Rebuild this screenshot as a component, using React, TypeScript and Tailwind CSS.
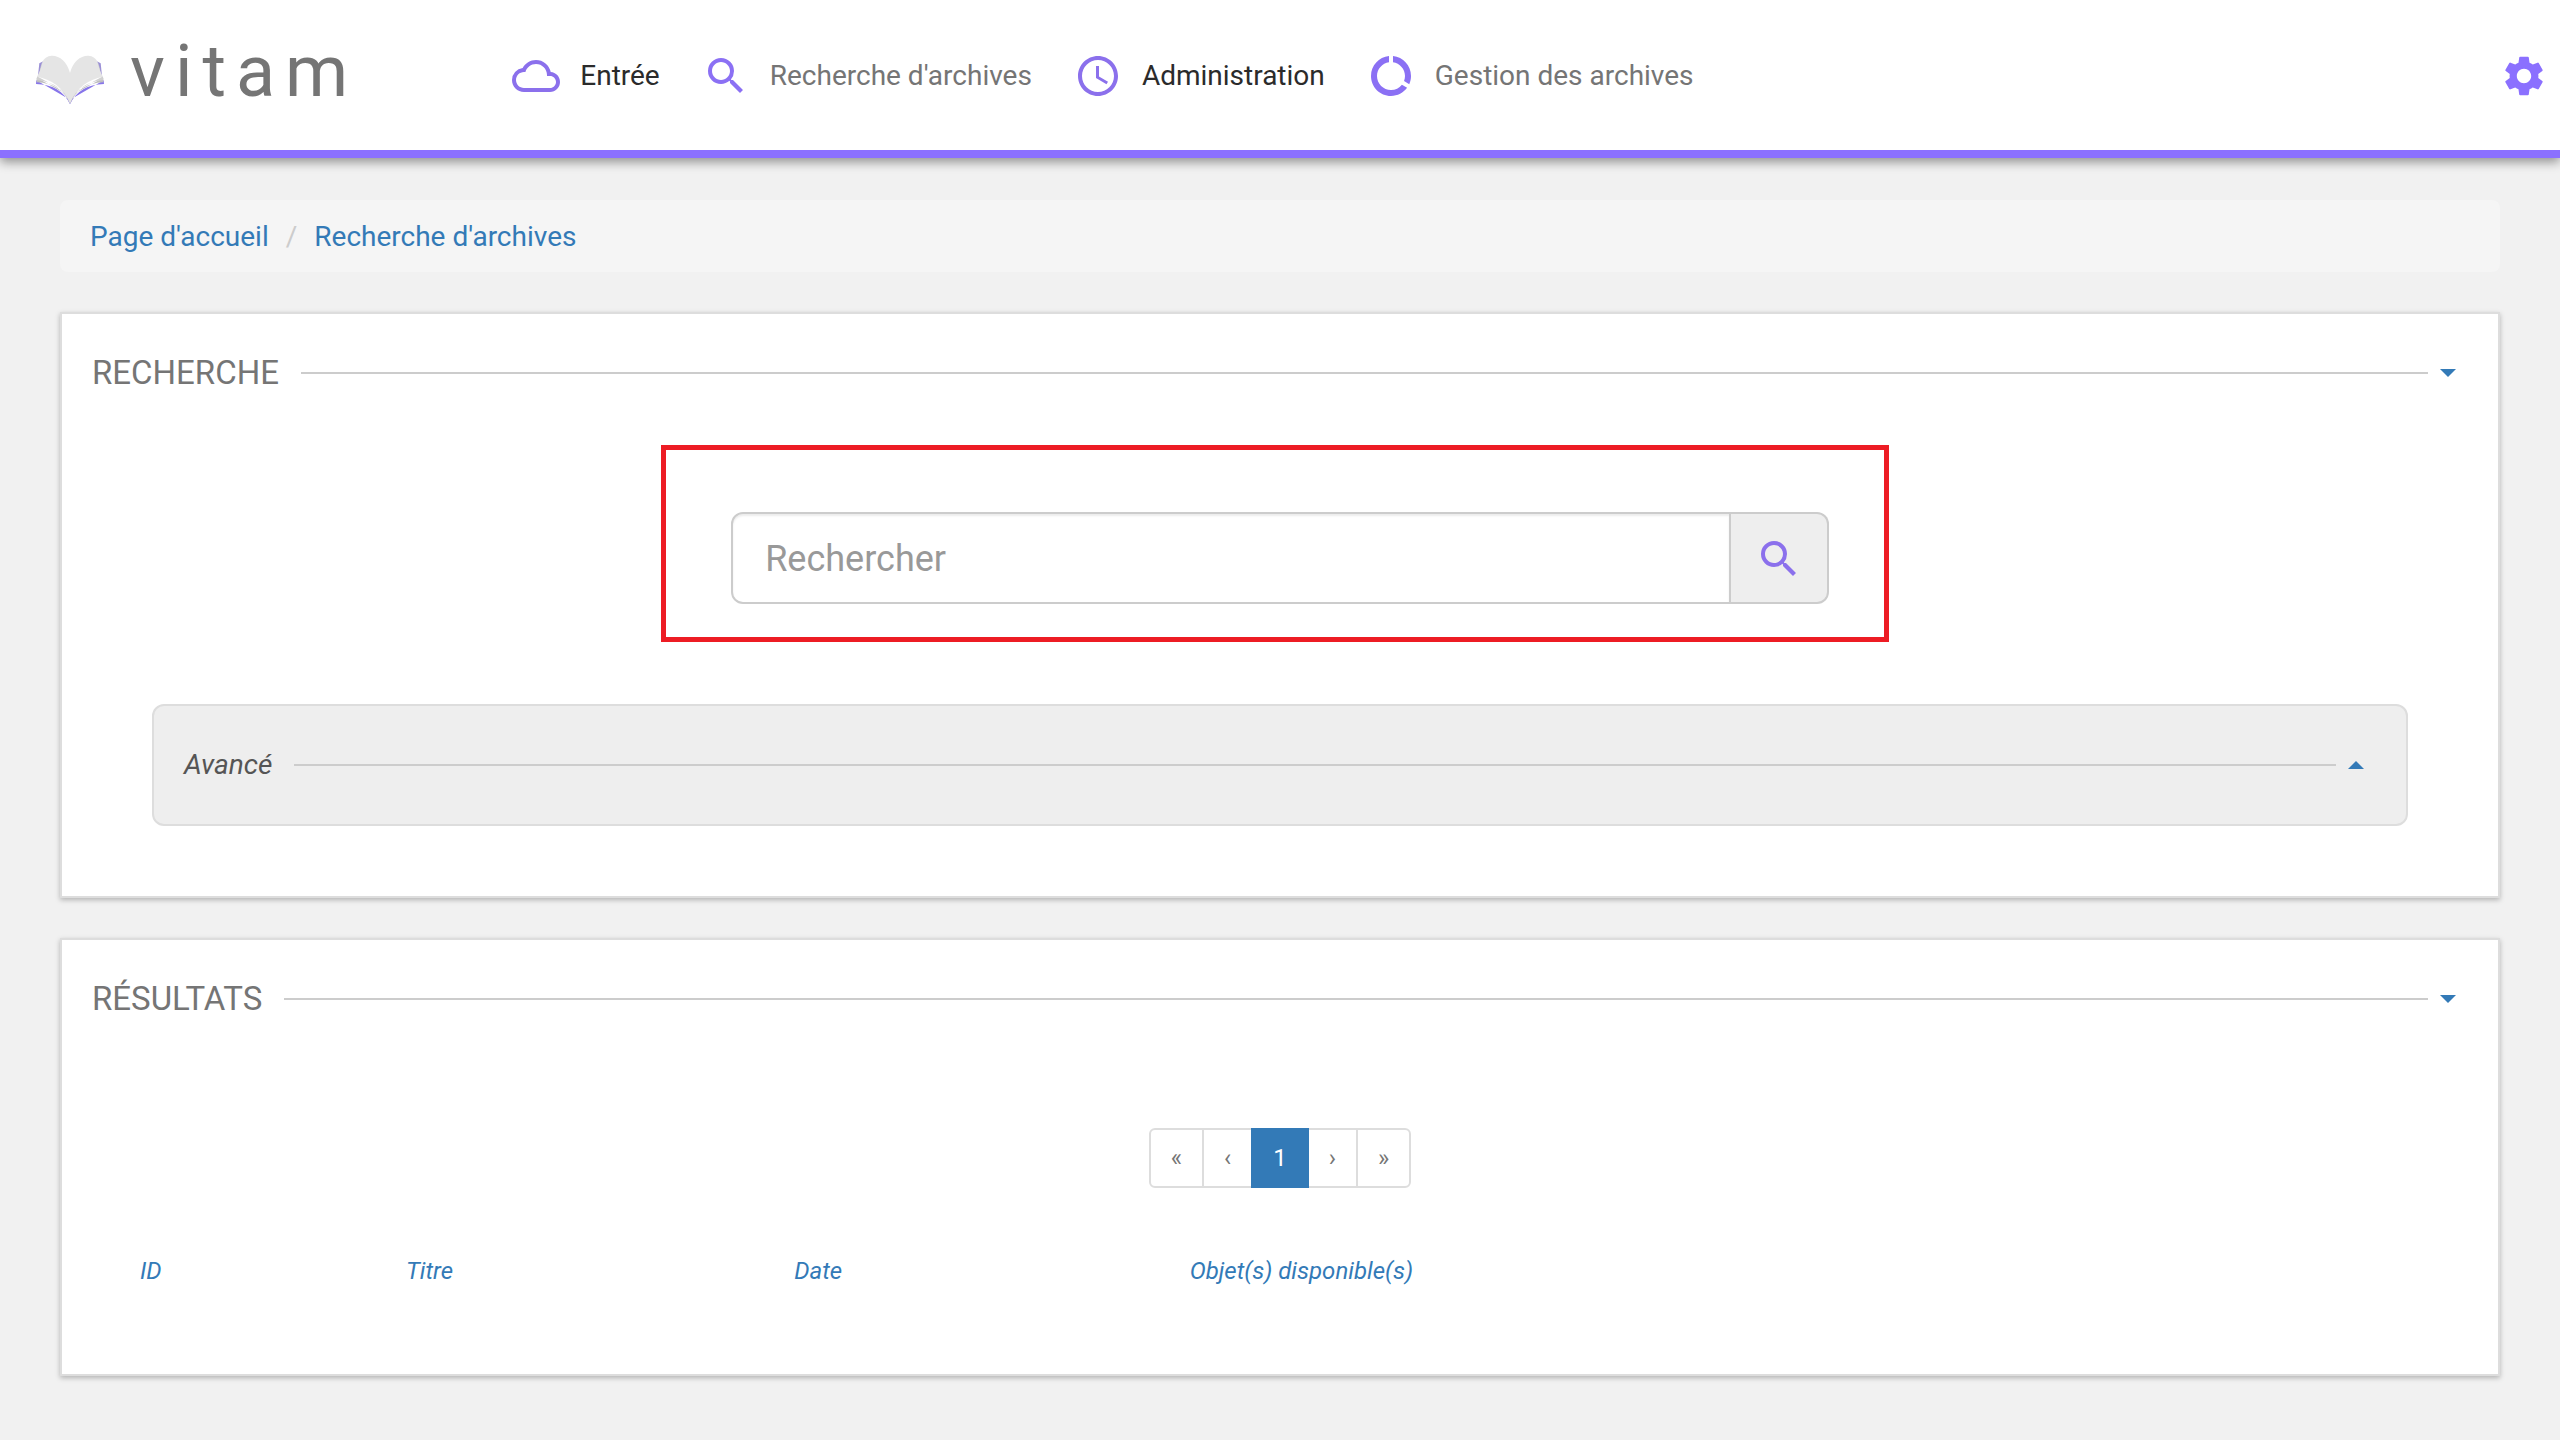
import type { ReactNode } from "react";
import {
  MdCloudQueue,
  MdDataUsage,
  MdSchedule,
  MdSearch,
  MdSettings,
} from "react-icons/md";

const navItems = [
  { label: "Entrée", Icon: MdCloudQueue, menu: true },
  { label: "Recherche d'archives", Icon: MdSearch, menu: false },
  { label: "Administration", Icon: MdSchedule, menu: true },
  { label: "Gestion des archives", Icon: MdDataUsage, menu: false },
];

const columns = [
  { label: "ID", width: "w-[11.5%]" },
  { label: "Titre", width: "w-[16.8%]" },
  { label: "Date", width: "w-[17.1%]" },
  { label: "Objet(s) disponible(s)", width: "" },
];

const pages = [
  { symbol: "«", label: "Première page" },
  { symbol: "‹", label: "Page précédente" },
  { symbol: "1", label: "Page 1", active: true },
  { symbol: "›", label: "Page suivante" },
  { symbol: "»", label: "Dernière page" },
];

function BookHalf() {
  return (
    <>
      <path d="M131 182 L118 189 L114 226 L130 222 Z" fill="#9a8fd6" />
      <path d="M126 186 L120 206 L117 228 L136 222 Z" fill="#c9c9d0" />
      <path d="M109 240 L108 251 Q182 252 210 312 L210 298 Z" fill="#8775ea" />
      <path d="M110 232 L110 246 Q184 249 210 310 L210 288 Z" fill="#bdbdbd" />
      <path d="M111 228 L111 240 Q186 247 210 309 L210 282 Z" fill="#d0d0d0" />
      <path
        d="M210 218 C202 184 178 165 155 166 C142 167 131 174 127 186 C124 200 119 217 111 229 C152 236 192 262 210 309 Z"
        fill="#e5e5e5"
      />
    </>
  );
}

function Logo() {
  return (
    <a href="#" className="flex items-center gap-[26px] pb-2">
      <svg viewBox="108 164 204 150" className="mt-4 h-[50px] w-[68px]" aria-hidden="true">
        <BookHalf />
        <g transform="translate(420 0) scale(-1 1)">
          <BookHalf />
        </g>
      </svg>
      <span className="text-[72px] leading-none tracking-[10px] text-[#757575]">vitam</span>
    </a>
  );
}

function Caret({ up = false }: { up?: boolean }) {
  return (
    <svg viewBox="0 0 16 8" className="h-2 w-4" aria-hidden="true">
      <path d={up ? "M0 8 L8 0 L16 8 Z" : "M0 0 L16 0 L8 8 Z"} fill="#337ab7" />
    </svg>
  );
}

function SectionTitle({ children, toggle, up }: { children: ReactNode; toggle: string; up?: boolean }) {
  return (
    <div className="flex h-10 items-center">
      {children}
      <span className="h-0.5 flex-1 bg-[#ccc]" />
      <button type="button" aria-label={toggle} className="mx-3 flex h-10 items-center">
        <Caret up={up} />
      </button>
    </div>
  );
}

function Panel({ title, toggle, children }: { title: string; toggle: string; children: ReactNode }) {
  return (
    <section className="border-2 border-[#ddd] bg-white px-[30px] pt-[39px] shadow-[0_2px_5px_rgba(0,0,0,0.26)]">
      <SectionTitle toggle={toggle}>
        <h2 className="mr-[22px] text-[33px] leading-10 text-[#757575] uppercase">{title}</h2>
      </SectionTitle>
      {children}
    </section>
  );
}

export default function App() {
  return (
    <div className="min-h-screen bg-[#f1f1f1] font-['Roboto',sans-serif] text-[28px] leading-10 text-[#2b2b2b]">
      <header className="flex h-[158px] items-center border-b-8 border-[#8b70ff] bg-white pt-0.5 pr-3 pl-9 shadow-[0_4px_10px_rgba(0,0,0,0.4)]">
        <Logo />
        <nav className="ml-[154px] flex items-center gap-[42px]">
          {navItems.map(({ label, Icon, menu }) =>
            menu ? (
              <button key={label} type="button" className="flex items-center gap-5">
                <Icon className="size-12 text-[#8b70ec]" />
                {label}
              </button>
            ) : (
              <a key={label} href="#" className="flex items-center gap-5 text-[#757575]">
                <Icon className="size-12 text-[#8b70f4]" />
                {label}
              </a>
            ),
          )}
        </nav>
        <button type="button" aria-label="Paramètres" className="ml-auto">
          <MdSettings className="size-12 text-[#8b70ff]" />
        </button>
      </header>

      <main className="flex flex-col gap-10 px-[60px] pt-[42px]">
        <nav aria-label="Fil d'Ariane" className="rounded-lg bg-[#f5f5f5] px-[30px] pt-[17px] pb-[15px] text-[#337ab7]">
          <ol className="flex">
            <li>
              <a href="#">Page d'accueil</a>
            </li>
            <li className="flex">
              <span className="px-[17px] text-[#ccc]">/</span>
              <a href="#">Recherche d'archives</a>
            </li>
          </ol>
        </nav>

        <Panel title="Recherche" toggle="Replier la recherche">
          <form
            className="relative mx-auto mt-[119px] flex h-[92px] w-[46.2%]"
            onSubmit={(event) => event.preventDefault()}
          >
            <input
              type="text"
              aria-label="Rechercher"
              placeholder="Rechercher"
              className="min-w-0 flex-1 rounded-l-xl border-2 border-[#ccc] bg-white px-8 pt-0.5 text-4xl shadow-[inset_0_2px_2px_rgba(0,0,0,0.075)] placeholder:text-[#999]"
            />
            <button
              type="submit"
              aria-label="Lancer la recherche"
              className="flex w-[98px] items-center justify-center rounded-r-xl border-2 border-l-0 border-[#ccc] bg-[#eee] pt-0.5"
            >
              <MdSearch className="size-12 text-[#8b70ec]" />
            </button>
            <div className="pointer-events-none absolute -top-[67px] -right-[60px] -bottom-[38px] -left-[70px] border-5 border-[#ed1c24]" />
          </form>

          <div className="mx-[60px] mt-[100px] mb-[70px] rounded-xl border-2 border-[#ddd] bg-[#eee] px-[30px] py-[39px]">
            <SectionTitle toggle="Déplier la recherche avancée" up>
              <h3 className="mr-[22px] text-[#555] italic">Avancé</h3>
            </SectionTitle>
          </div>
        </Panel>

        <Panel title="Résultats" toggle="Replier les résultats">
          <ul className="mt-[109px] flex justify-center pl-0.5 text-2xl leading-9 text-[#757575]">
            {pages.map(({ symbol, label, active }) => (
              <li key={label} className="group -ml-0.5">
                <button
                  type="button"
                  aria-label={label}
                  aria-current={active ? "page" : undefined}
                  className={
                    active
                      ? "relative border-2 border-[#337ab7] bg-[#337ab7] px-5 py-2.5 text-white"
                      : "border-2 border-[#ddd] bg-white px-5 py-2.5 group-first:rounded-l-md group-last:rounded-r-md"
                  }
                >
                  {symbol}
                </button>
              </li>
            ))}
          </ul>
          <div className="px-8 pt-[55px] pb-[75px]">
            <table className="w-full table-fixed text-left text-2xl leading-9 text-[#337ab7] italic">
              <thead>
                <tr>
                  {columns.map(({ label, width }) => (
                    <th key={label} scope="col" className={`${width} px-4 py-2.5 font-normal`}>
                      <button type="button" className="italic">
                        {label}
                      </button>
                    </th>
                  ))}
                </tr>
              </thead>
            </table>
          </div>
        </Panel>
      </main>
    </div>
  );
}
